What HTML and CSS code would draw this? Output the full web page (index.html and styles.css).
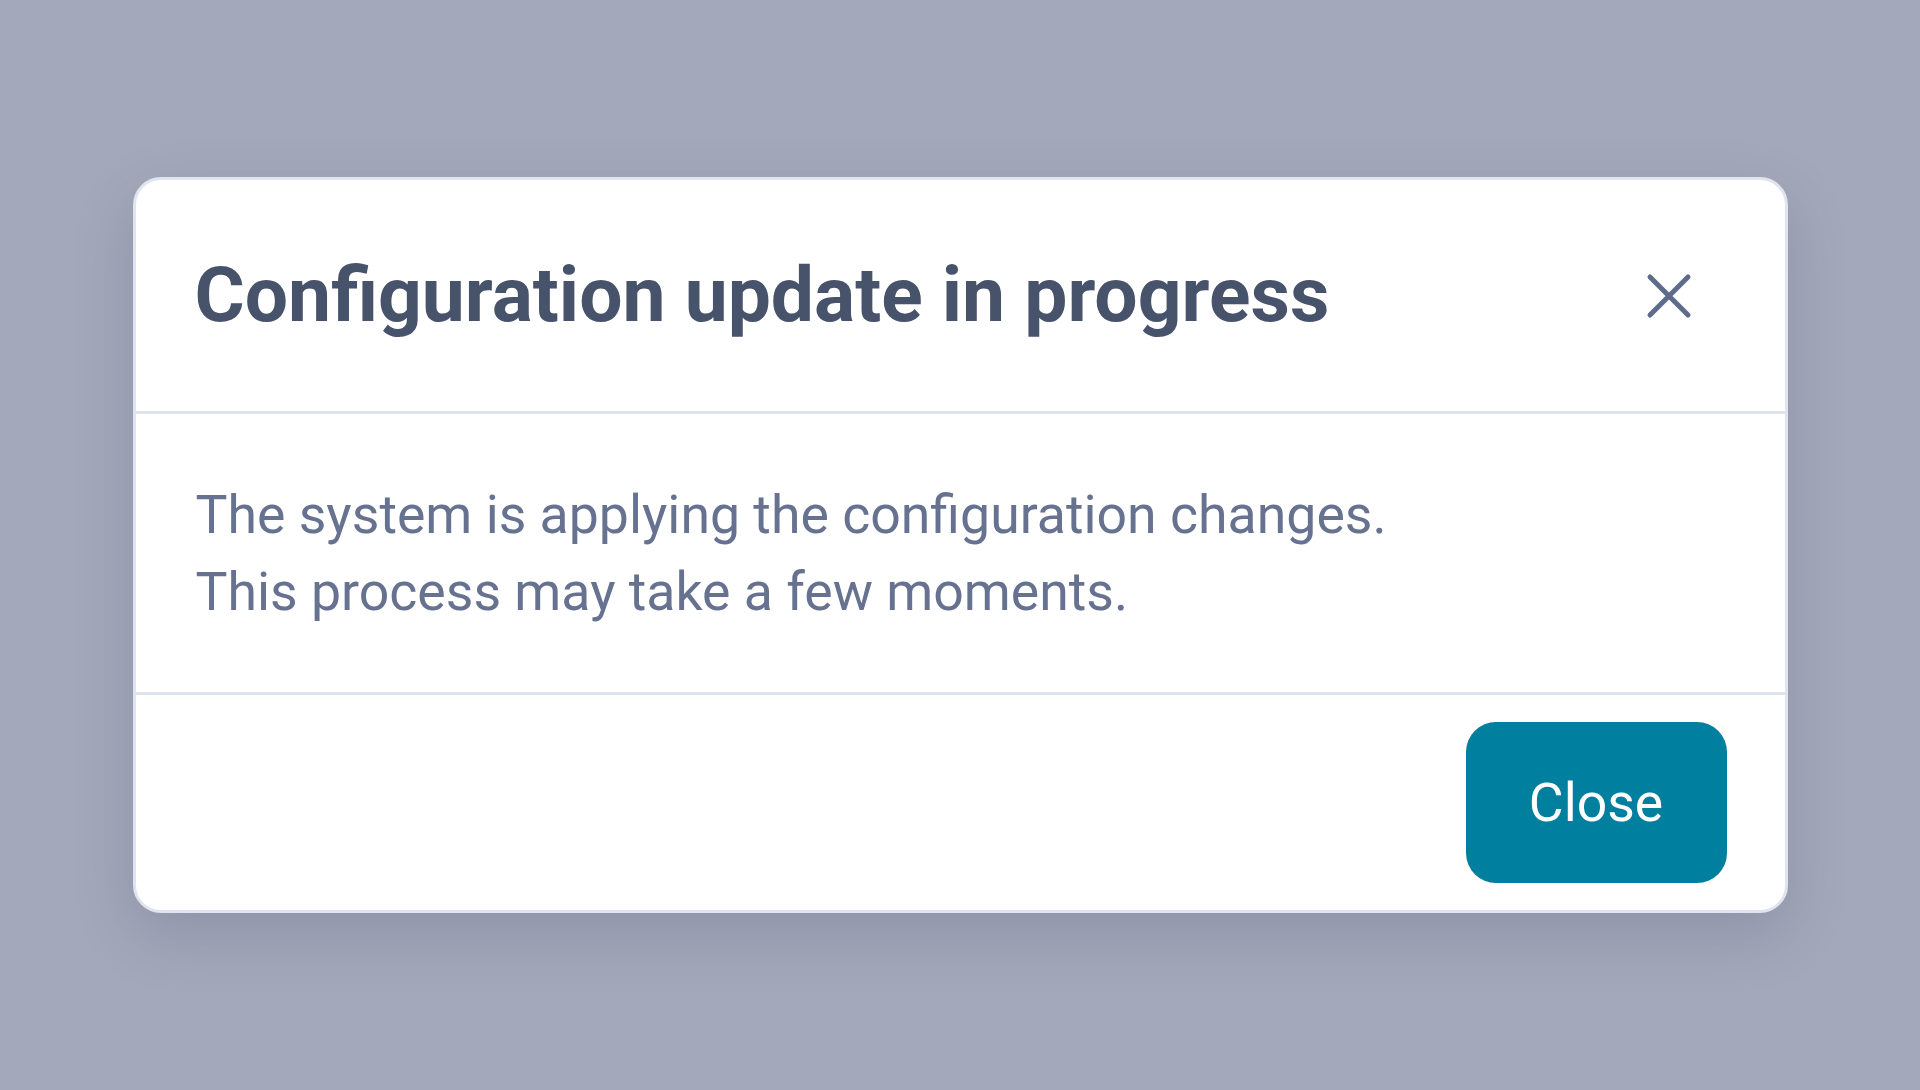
FILE: index.html
```html
<!DOCTYPE html>
<html lang="en">
<head>
<meta charset="utf-8">
<title>Configuration update in progress</title>
<link rel="stylesheet" href="styles.css">
</head>
<body>
<div class="overlay">
  <div class="dialog" role="dialog" aria-labelledby="dlg-title">
    <div class="dialog-header">
      <h2 class="dialog-title" id="dlg-title">Configuration update in progress</h2>
      <button class="icon-btn" aria-label="Close">
        <svg viewBox="0 0 46 46" width="46" height="46" aria-hidden="true">
          <path d="M4 4 L42 42 M42 4 L4 42" stroke="currentColor" stroke-width="5" stroke-linecap="round" fill="none"/>
        </svg>
      </button>
    </div>
    <div class="dialog-body">
      <p class="dialog-text">The system is applying the configuration changes.<br>This process may take a few moments.</p>
    </div>
    <div class="dialog-footer">
      <button class="btn-primary">Close</button>
    </div>
  </div>
</div>
</body>
</html>
```

FILE: styles.css
```css
* { box-sizing: border-box; }
html, body { margin: 0; padding: 0; }
body {
  background: #a3a8ba;
  font-family: Roboto, "Liberation Sans", sans-serif;
}
.overlay {
  height: 100vh;
  display: flex;
  align-items: center;
  justify-content: center;
}
.dialog {
  width: 1655px;
  background: #ffffff;
  border: 3px solid #dfe4ee;
  border-radius: 28px;
  box-shadow: 0 22px 60px rgba(50, 56, 84, 0.18);
  display: flex;
  flex-direction: column;
}
.dialog-header {
  height: 234px;
  display: flex;
  align-items: center;
  justify-content: space-between;
  padding: 0 93px 0 59px;
  border-bottom: 3px solid #dde4ee;
}
.dialog-title {
  margin: 0;
  font-size: 76.8px;
  font-weight: 700;
  line-height: 1.2;
  color: #47526b;
}
.icon-btn {
  background: none;
  border: 0;
  padding: 0;
  margin: 0;
  width: 46px;
  height: 46px;
  color: #5f6b8a;
  display: flex;
}
.dialog-body {
  padding: 62px 60px;
  border-bottom: 3px solid #dde4ee;
}
.dialog-text {
  margin: 0;
  font-size: 53.6px;
  line-height: 77px;
  color: #66728f;
}
.dialog-footer {
  display: flex;
  justify-content: flex-end;
  padding: 27px 58px 27px 60px;
}
.btn-primary {
  width: 261px;
  height: 161px;
  border: 0;
  border-radius: 30px;
  background: #007f9f;
  color: #ffffff;
  font-family: Roboto, "Liberation Sans", sans-serif;
  font-size: 53.5px;
  font-weight: 400;
}
```
